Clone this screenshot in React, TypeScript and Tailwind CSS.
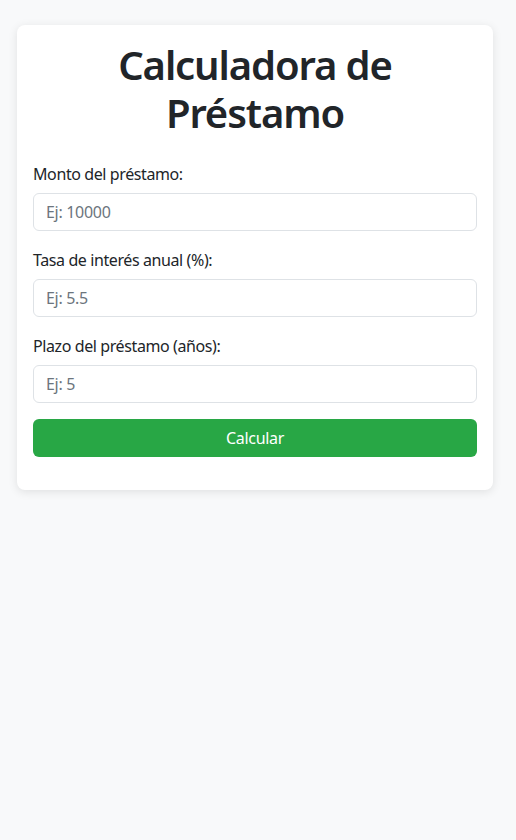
import React from "react";

const fields = [
  { label: "Monto del préstamo:", ph: "Ej: 10000" },
  { label: "Tasa de interés anual (%):", ph: "Ej: 5.5" },
  { label: "Plazo del préstamo (años):", ph: "Ej: 5" },
];

export default function App() {
  return (
    <div
      className="min-h-[840px] bg-[#f8f9fa] px-[17px] pt-[25px] text-[#212529]"
      style={{ fontFamily: '"Noto Sans", "Open Sans", sans-serif' }}
    >
      <div className="w-[476px] rounded-[8px] bg-white p-4 pb-[33px] shadow-[0_2px_10px_rgba(0,0,0,0.1)]">
        <h1 className="mb-[25px] text-center text-[40px] font-semibold leading-[48px] tracking-[-1.1px]">
          Calculadora de Préstamo
        </h1>
        <div className="flex flex-col">
          {fields.map((f, i) => (
            <div key={i} className={i > 0 ? "mt-[17px]" : ""}>
              <label className="mb-[7px] block text-[16px] leading-[24px] tracking-[-0.4px]">{f.label}</label>
              <input
                type="text"
                placeholder={f.ph}
                className="block h-[38px] w-full rounded-[6px] border border-[#dee2e6] bg-white px-3 text-[16px] tracking-[-0.3px] text-[#212529] placeholder:text-[#6c757d] outline-none"
              />
            </div>
          ))}
          <button className="mt-[16px] h-[38px] w-full rounded-[6px] bg-[#28a745] text-[16px] tracking-[-0.3px] text-white">
            Calcular
          </button>
        </div>
      </div>
    </div>
  );
}
